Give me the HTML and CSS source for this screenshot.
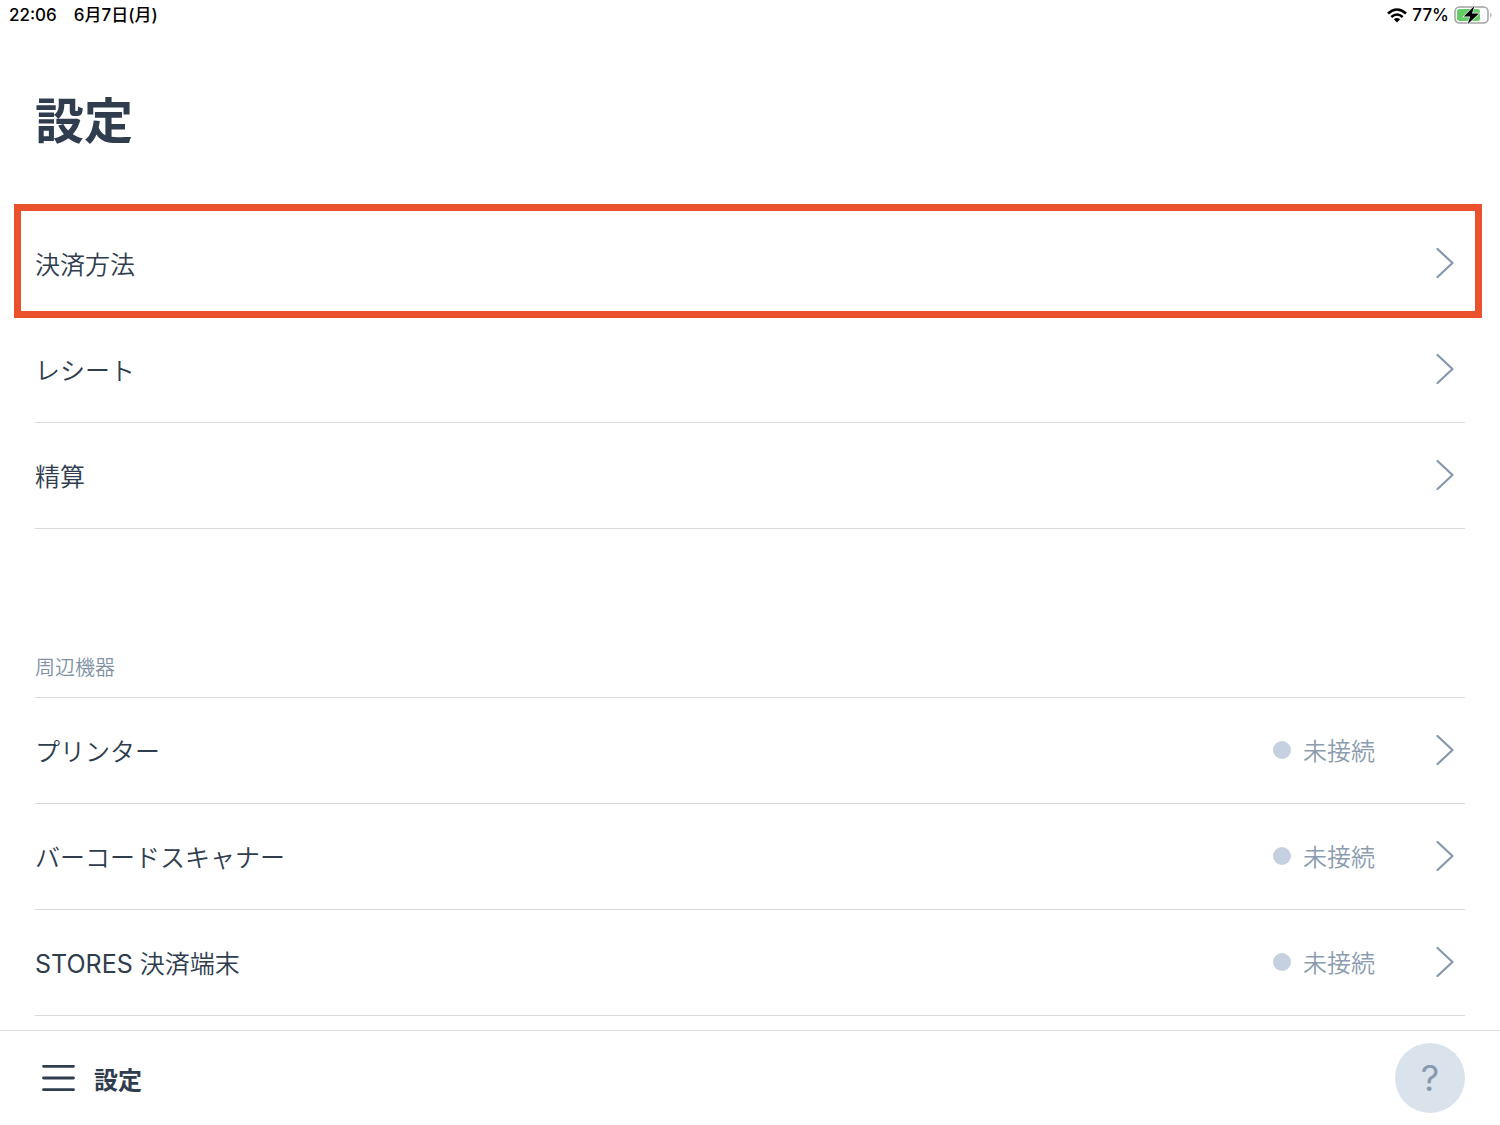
FILE: index.html
```
<!DOCTYPE html>
<html lang="ja">

<head>
	<meta charset="UTF-8">
	<meta name="viewport" content="width=device-width, initial-scale=1.0">
	<title>設定</title>
	<link rel="stylesheet" href="styles.css">
</head>

<body>
	<svg class="defs" aria-hidden="true">
		<symbol id="chevron" viewBox="0 0 20 32">
			<path d="M2.5 2 L17.5 16 L2.5 30" fill="none" stroke="currentColor" stroke-width="2.3" stroke-linecap="round" stroke-linejoin="round" />
		</symbol>
	</svg>

	<header class="status-bar">
		<div class="status-left">
			<span>22:06</span>
			<span>6月7日(月)</span>
		</div>
		<div class="status-right">
			<svg class="wifi" viewBox="0 0 20 15" aria-hidden="true">
				<g fill="none" stroke="#000" stroke-width="2.6">
					<path d="M1 5.4 Q10 -2.4 19 5.4" />
					<path d="M4.3 8.9 Q10 4.1 15.7 8.9" />
				</g>
				<path d="M6.8 11.2 Q10 8.6 13.2 11.2 L10 14.5 Z" />
			</svg>
			<span>77%</span>
			<svg class="battery" viewBox="0 0 40 20" aria-hidden="true">
				<rect x="1" y="2" width="33" height="16" rx="4.5" fill="#fff" stroke="#a3a3a3" stroke-width="1.5" />
				<rect x="3" y="4" width="23" height="12" rx="2.5" fill="#65cd68" />
				<path d="M36.3 7.5 Q39 10 36.3 12.8 Z" fill="#a3a3a3" />
				<path d="M20.5 0.8 L9.8 11.6 H16.2 L13.6 19.2 L25 8.4 H18 Z" stroke="#fff" stroke-width="1.2" paint-order="stroke" />
			</svg>
		</div>
	</header>

	<main class="content">
		<h1 class="title">設定</h1>

		<ul class="list">
			<li><a href="#payment" class="row highlighted">
				<span class="label">決済方法</span>
				<svg class="chevron"><use href="#chevron" /></svg>
			</a></li>
			<li><a href="#receipt" class="row">
				<span class="label">レシート</span>
				<svg class="chevron"><use href="#chevron" /></svg>
			</a></li>
			<li><a href="#settlement" class="row">
				<span class="label">精算</span>
				<svg class="chevron"><use href="#chevron" /></svg>
			</a></li>
		</ul>

		<h2 class="section-title">周辺機器</h2>
		<ul class="list">
			<li><a href="#printer" class="row">
				<span class="label">プリンター</span>
				<span class="connection">未接続</span>
				<svg class="chevron"><use href="#chevron" /></svg>
			</a></li>
			<li><a href="#scanner" class="row">
				<span class="label">バーコードスキャナー</span>
				<span class="connection">未接続</span>
				<svg class="chevron"><use href="#chevron" /></svg>
			</a></li>
			<li><a href="#terminal" class="row">
				<span class="label"><span class="brand">STORES</span> 決済端末</span>
				<span class="connection">未接続</span>
				<svg class="chevron"><use href="#chevron" /></svg>
			</a></li>
		</ul>
	</main>

	<footer class="bottom-bar">
		<button type="button" class="menu">
			<svg class="menu-icon" viewBox="0 0 34 28" aria-hidden="true">
				<path d="M2 2.3 H32 M2 14 H32 M2 25.7 H32" stroke="currentColor" stroke-width="2.8" stroke-linecap="round" />
			</svg>
			設定
		</button>
		<button type="button" class="help" aria-label="ヘルプ">?</button>
	</footer>
</body>

</html>
```

FILE: styles.css
```
* {
	box-sizing: border-box;
}

body {
	margin: 0;
	height: 100vh;
	display: flex;
	flex-direction: column;
	background: #fff;
	color: #2f3d4f;
	font-family: Inter, "Noto Sans CJK JP", sans-serif;
}

button {
	border: none;
	padding: 0;
	background: none;
	color: inherit;
	font-family: inherit;
	cursor: pointer;
}

.defs {
	display: none;
}

/* status bar */

.status-bar {
	display: flex;
	justify-content: space-between;
	align-items: center;
	flex: none;
	height: 30px;
	padding: 0 6px 0 9px;
	color: #000;
	font-size: 17px;
	font-weight: 500;
	line-height: 30px;
}

.status-left {
	display: flex;
	gap: 17px;
}

.status-right {
	display: flex;
	align-items: center;
	gap: 5px;
}

.wifi {
	width: 20px;
	height: 15px;
}

.battery {
	width: 40px;
	height: 20px;
}

/* settings */

.content {
	flex: 1;
	min-height: 0;
	overflow: hidden;
	padding: 0 35px;
}

.title {
	margin: 56px 0 53px;
	font-size: 49px;
	font-weight: 700;
	line-height: 72px;
}

.list {
	margin: 0;
	padding: 0;
	list-style: none;
}

.row {
	position: relative;
	display: flex;
	align-items: center;
	height: 106px;
	padding: 0 10px 2px 0;
	border-bottom: 1px solid #d9d9d9;
	color: inherit;
	font-size: 25px;
	font-weight: 350;
	text-decoration: none;
}

.label {
	flex: 1;
}

.brand {
	font-weight: 400;
}

.highlighted::after {
	content: "";
	position: absolute;
	inset: -7px -17px -2px -21px;
	border: 7px solid #ec512d;
}

.chevron {
	width: 20px;
	height: 32px;
	color: #8799ae;
}

.connection {
	display: flex;
	align-items: center;
	gap: 12px;
	margin-right: 60px;
	color: #8b9cb0;
	font-size: 24px;
}

.connection::before {
	content: "";
	width: 18px;
	height: 18px;
	border-radius: 50%;
	background: #c5d1e0;
}

.section-title {
	margin: 123px 0 0;
	padding-bottom: 13px;
	border-bottom: 1px solid #d9d9d9;
	color: #8192a7;
	font-size: 20px;
	font-weight: 350;
	line-height: 32px;
}

/* bottom bar */

.bottom-bar {
	display: flex;
	justify-content: space-between;
	align-items: center;
	flex: none;
	height: 95px;
	padding: 0 35px 0 41px;
	border-top: 1px solid #dedede;
}

.menu {
	display: flex;
	align-items: center;
	gap: 18px;
	font-size: 24px;
	font-weight: 700;
}

.menu-icon {
	width: 35px;
	height: 28px;
}

.help {
	width: 70px;
	height: 70px;
	border-radius: 50%;
	background: #dae2ec;
	color: #8799ae;
	font-size: 36px;
	font-weight: 400;
}
```
